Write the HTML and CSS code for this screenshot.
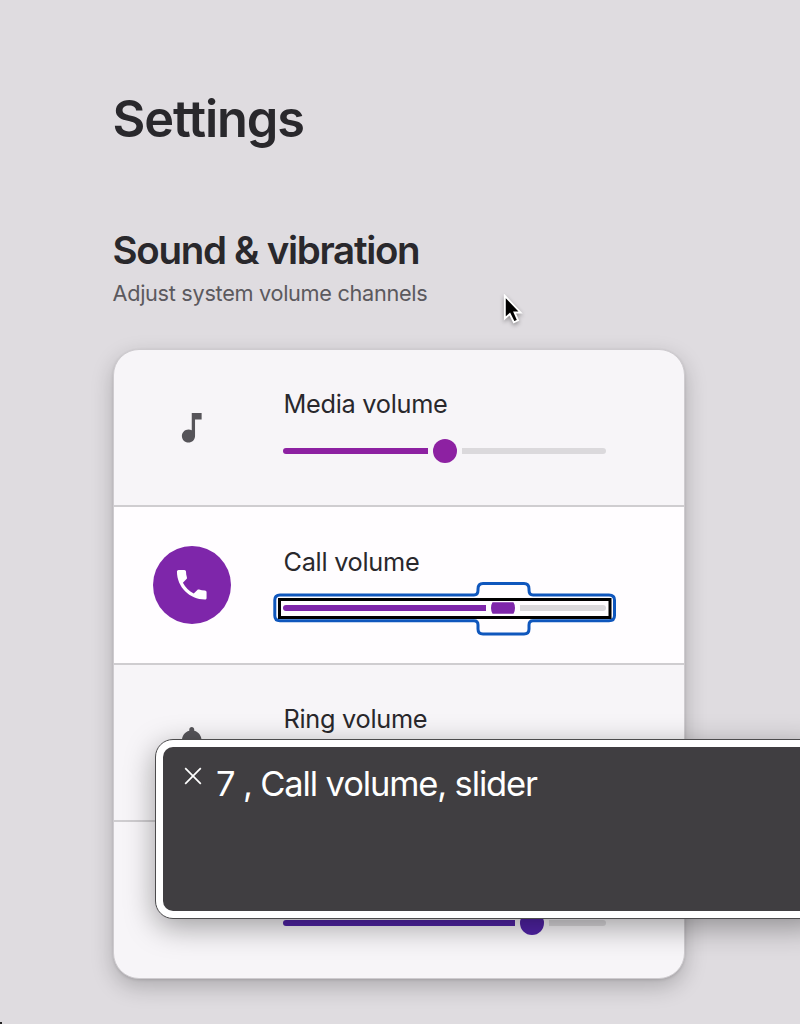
FILE: index.html
```
<!DOCTYPE html>
<html lang="en">
<head>
<meta charset="utf-8">
<title>Settings</title>
<link rel="stylesheet" href="styles.css">
</head>
<body>
<main class="page">
  <h1 class="title">Settings</h1>
  <h2 class="heading">Sound &amp; vibration</h2>
  <p class="sub">Adjust system volume channels</p>
  <section class="card">
    <div class="row">
      <div class="icon"><svg viewBox="0 0 24 24"><path d="M12 3v10.550c-.59-.34-1.270-.55-2-.55-2.210 0-4 1.790-4 4s1.790 4 4 4 4-1.790 4-4V7h4V3h-6z"/></svg></div>
      <div class="control">
        <span class="label">Media volume</span>
        <div class="slider"><i class="fill" style="width:145px"></i><i class="thumb"></i><i class="rest"></i></div>
      </div>
    </div>
    <div class="row active">
      <div class="icon"><svg viewBox="0 0 24 24"><path d="M20 15.500c-1.250 0-2.450-.2-3.570-.57-.35-.11-.74-.03-1.020.24l-2.200 2.200c-2.830-1.440-5.150-3.750-6.590-6.590l2.200-2.210c.28-.26.36-.65.25-1C8.700 6.450 8.500 5.250 8.500 4c0-.55-.45-1-1-1H4c-.55 0-1 .45-1 1 0 9.390 7.610 17 17 17 .55 0 1-.45 1-1v-3.500c0-.55-.45-1-1-1z"/></svg></div>
      <div class="control">
        <span class="label">Call volume</span>
        <div class="slider clipped"><i class="fill" style="width:203px"></i><i class="thumb"></i><i class="rest"></i>
          <svg class="focus" viewBox="270 578 350 62">
            <path d="M280 595H474Q478 595 478 590V589Q478 583.500 483 583.500H524Q529 583.500 529 589V590Q529 595 533 595H609Q614.500 595 614.500 600V615.500Q614.500 620.800 609 620.800H533Q529 620.800 529 625V629Q529 634 524 634H483Q478 634 478 629V625Q478 620.800 474 620.800H280Q274.800 620.800 274.800 615.500V600Q274.800 595 280 595Z" fill="none" stroke="#0f57bd" stroke-width="3"/>
            <rect x="279.500" y="599.500" width="330.500" height="18" fill="none" stroke="#000" stroke-width="3"/>
          </svg>
        </div>
      </div>
    </div>
    <div class="row ring">
      <div class="icon"><svg viewBox="0 0 24 24"><path d="M12 22c1.100 0 2-.9 2-2h-4c0 1.100.9 2 2 2zm6-6v-5c0-3.070-1.630-5.640-4.500-6.320V4c0-.83-.67-1.500-1.500-1.500s-1.500.67-1.500 1.500v.68C7.640 5.360 6 7.920 6 11v5l-2 2v1h16v-1l-2-2z"/></svg></div>
      <div class="control"><span class="label">Ring volume</span></div>
    </div>
    <div class="row last">
      <div class="icon"></div>
      <div class="control">
        <span class="label"></span>
        <div class="slider"><i class="fill" style="width:232px"></i><i class="thumb"></i><i class="rest"></i></div>
      </div>
    </div>
  </section>
</main>
<svg class="cursor" viewBox="0 0 24 34"><path d="M3 2V26L8.300 21.300L12.600 30L17 28L13.300 19.600H19.700Z" fill="#000" stroke="#fff" stroke-width="2"/></svg>
<aside class="caption">
  <div class="caption-body">
    <svg class="close" viewBox="0 0 18 18"><path d="M1.200 1.200 16.800 16.800M16.800 1.200 1.200 16.800"/></svg>
    <p class="spoken">7 , Call volume, slider</p>
  </div>
</aside>
<i class="corner"></i>
</body>
</html>
```
FILE: styles.css
```
* { box-sizing: border-box; }
body {
  margin: 0; width: 800px; height: 1024px; overflow: hidden; position: relative;
  background: #dfdce0; color: #29282c;
  font-family: Inter, "Liberation Sans", sans-serif;
}
.page { padding: 84px 115px 0 112.500px; }
h1, h2, p { margin: 0; white-space: nowrap; }
.title { font-size: 50.500px; line-height: 70px; font-weight: 560; letter-spacing: -1.100px; font-variant-ligatures: none; }
.heading { margin-top: 70px; font-size: 38.500px; line-height: 52px; font-weight: 560; letter-spacing: -1.300px; }
.sub { margin-top: 2px; font-size: 21.700px; line-height: 30px; color: #5b595e; letter-spacing: -.3px; }
.card {
  margin: 41px 0 0 .500px; width: 572px; height: 630px; border: 1px solid #cecbcf; border-radius: 26px;
  background: #f7f5f8; overflow: hidden;
  box-shadow: 0 8px 22px rgba(0,0,0,.22), 0 1px 3px rgba(0,0,0,.12);
}
.row { height: 157.500px; display: flex; padding: 38px 0 0 39px; border-top: 2px solid #cfcdd0; }
.row:first-child { height: 155px; border-top: 0; }
.row.active { background: #fffdff; }
.icon { width: 78px; height: 78px; border-radius: 50%; display: flex; align-items: center; justify-content: center; }
.icon svg { width: 39.500px; height: 39.500px; fill: #565459; position: relative; top: .8px; }
.active .icon { background: #7e26aa; margin-top: 1px; }
.active .icon svg { fill: #fff; top: 0; }
.ring .icon svg { top: 1.500px; }
.control { margin-left: 52px; width: 323px; }
.label { display: block; height: 32px; line-height: 32px; font-size: 25.300px; white-space: nowrap; letter-spacing: -.28px; margin-left: .5px; }
.active .label { margin-top: 1px; }
.slider { position: relative; margin-top: 18px; height: 26px; display: flex; align-items: center; gap: 4.500px; color: #8d21a2; }
.active .slider { color: #7e26aa; margin-top: 17px; }
.last .slider { color: #5023a5; }
.fill { height: 6.500px; background: currentColor; border-radius: 3px 0 0 3px; }
.thumb { width: 24.500px; height: 24.500px; border-radius: 50%; background: currentColor; }
.rest { flex: 1; height: 6.500px; background: #dbd9dc; border-radius: 0 3px 3px 0; }
.clipped .thumb { clip-path: inset(6.500px 0); }
.focus { position: absolute; left: -13px; top: -17px; width: 350px; height: 62px; }
.cursor { position: absolute; left: 501.500px; top: 294px; width: 22.600px; height: 32px; filter: drop-shadow(0 2px 2px rgba(0,0,0,.35)); }
.caption {
  position: absolute; left: 155px; top: 739px; width: 670px; height: 180px; padding: 7px;
  background: #fff; border: 1px solid #4c4b4d; border-radius: 18px;
  box-shadow: 0 8px 30px rgba(0,0,0,.36);
}
.caption-body { height: 100%; border-radius: 10px; background: #403e41; display: flex; padding: 20px 21px; color: #fff; }
.close { width: 18px; height: 18px; fill: none; stroke: #fff; stroke-width: 1.700; }
.spoken { margin: -6px 0 0 14px; font-size: 34.500px; line-height: 46px; letter-spacing: -1.140px; }
.corner { position: absolute; left: 0; bottom: 0; width: 2px; height: 2px; background: #222; }
```
